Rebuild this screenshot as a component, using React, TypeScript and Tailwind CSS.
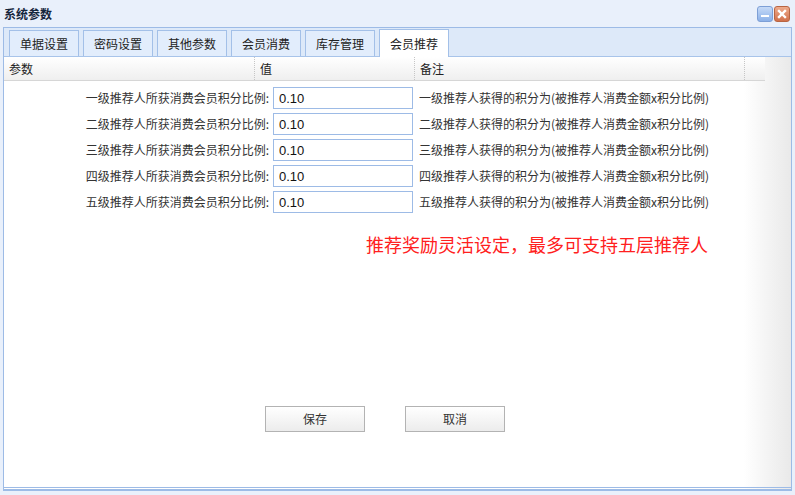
const tabs = ['单据设置', '密码设置', '其他参数', '会员消费', '库存管理', '会员推荐'];
const levels = ['一', '二', '三', '四', '五'];

export default function App() {
  return (
    <div
      className="w-[795px] h-[495px] bg-[#e9f0fb] flex flex-col overflow-hidden text-[#222] text-[12px]"
      style={{ fontFamily: '"Noto Sans CJK SC", "Liberation Sans", sans-serif' }}
    >
      {/* title bar */}
      <div className="h-[27px] flex items-center justify-between pl-[4px] pr-[5px]">
        <span className="font-bold text-[12px] text-[#15263d]">系统参数</span>
        <div className="flex gap-[1px]">
          <div className="w-[16px] h-[16px] rounded-[3px] border border-[#7d9fd6] bg-gradient-to-b from-[#c6daf7] to-[#8cb1e8] flex items-center justify-center">
            <div className="w-[8px] h-[2px] bg-white mt-[5px]" />
          </div>
          <div className="w-[16px] h-[16px] rounded-[3px] border border-[#b86543] bg-gradient-to-b from-[#eeab8c] to-[#d0704b] flex items-center justify-center">
            <svg width="10" height="10" viewBox="0 0 10 10">
              <path d="M2 2 L8 8 M8 2 L2 8" stroke="white" strokeWidth="2.4" strokeLinecap="square" />
            </svg>
          </div>
        </div>
      </div>

      {/* panel */}
      <div className="mx-[3px] h-[464px] border border-[#9dbbe6] flex flex-col">
        {/* tab strip */}
        <div className="h-[29px] bg-[#dde9f9] flex items-end gap-[4px] pl-[5px] border-b border-[#a8c4ea]">
          {tabs.map((t, i) => {
            const active = i === tabs.length - 1;
            return (
              <div
                key={t}
                className={`w-[70px] flex items-center justify-center border border-b-0 border-[#a3c0e8] text-[12px] ${
                  active ? 'h-[28px] bg-white -mb-[1px]' : 'h-[26px] bg-[#e2edfc]'
                }`}
              >
                {t}
              </div>
            );
          })}
        </div>

        {/* body */}
        <div className="flex-1 bg-[linear-gradient(to_right,#ffffff_94%,#e9e9e9)] border-b-[3px] border-double border-[#9dbbe6] flex flex-col">
          {/* grid header */}
          <div className="w-[761px] h-[24px] flex bg-gradient-to-b from-[#ffffff] to-[#efefef] border-b border-[#d6d6d6]">
            <div className="w-[251px] pl-[5px] flex items-center border-r border-dotted border-[#c6c6c6]">参数</div>
            <div className="w-[160px] pl-[5px] flex items-center border-r border-dotted border-[#c6c6c6]">值</div>
            <div className="w-[330px] pl-[5px] flex items-center border-r border-dotted border-[#c6c6c6]">备注</div>
            <div className="flex-1" />
          </div>

          {/* rows */}
          <div className="flex flex-col gap-[4px] pt-[6px]">
            {levels.map((l) => (
              <div key={l} className="flex items-center h-[22px]">
                <div className="w-[266px] text-right pr-[1px] text-[#333]">{l}级推荐人所获消费会员积分比例:</div>
                <input
                  defaultValue="0.10"
                  className="ml-[3px] w-[140px] h-[22px] border border-[#9dbbe6] bg-white px-[5px] text-[13px] text-[#111] outline-none"
                  style={{ fontFamily: '"Liberation Sans", Arial, sans-serif' }}
                />
                <div className="ml-[6px] text-[#333]">{l}级推荐人获得的积分为(被推荐人消费金额x积分比例)</div>
              </div>
            ))}
          </div>

          <div className="pl-[362px] mt-[19px] text-[18px] leading-[24px] text-[#ff2020]">
            推荐奖励灵活设定，最多可支持五层推荐人
          </div>

          <div className="flex gap-[40px] pl-[261px] mt-[150px]">
            <button className="w-[100px] h-[26px] border border-[#b3b3b3] bg-gradient-to-b from-white to-[#ececec] text-[12px] text-[#333]">
              保存
            </button>
            <button className="w-[100px] h-[26px] border border-[#b3b3b3] bg-gradient-to-b from-white to-[#ececec] text-[12px] text-[#333]">
              取消
            </button>
          </div>
        </div>
      </div>
    </div>
  );
}
